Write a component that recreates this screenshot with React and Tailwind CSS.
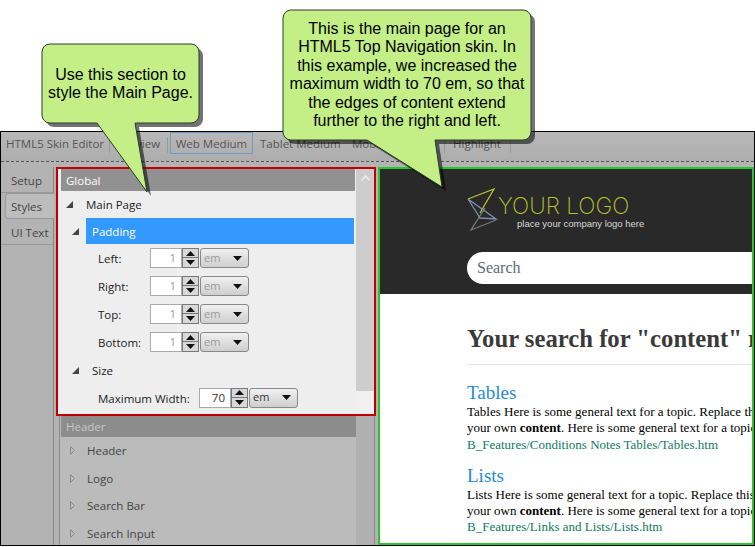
import React from 'react';

const uiFont = "font-['Open_Sans',sans-serif]";

function Expanded() {
  return (
    <svg width="7" height="7" viewBox="0 0 7 7" className="shrink-0">
      <path d="M7 0V7H0Z" fill="#444" />
    </svg>
  );
}

function Collapsed() {
  return (
    <svg width="5" height="9" viewBox="0 0 5 9" className="shrink-0">
      <path d="M0.5 0.5L4.5 4.5L0.5 8.5Z" fill="none" stroke="#8a8a8a" />
    </svg>
  );
}

function Stepper({ value, active }) {
  return (
    <div className="flex items-center h-[20px]">
      <div className={`w-[32px] h-[20px] bg-white border border-[#aaa] flex items-center justify-end pr-[5px] text-[11.5px] ${active ? 'text-[#333]' : 'text-[#999]'}`}>
        {value}
      </div>
      <div className="w-[17px] h-[20px] bg-[#d8d8d8] border border-[#777] flex flex-col items-center justify-around py-[1px]">
        <svg width="9" height="5" viewBox="0 0 9 5"><path d="M4.5 0L9 5H0Z" fill="#111" /></svg>
        <div className="w-full h-px bg-[#777]" />
        <svg width="9" height="5" viewBox="0 0 9 5"><path d="M0 0H9L4.5 5Z" fill="#111" /></svg>
      </div>
      <div className={`w-[49px] h-[20px] ml-[1px] rounded-[3px] border border-[#888] bg-gradient-to-b from-[#f0f0f0] to-[#cfcfcf] flex items-center justify-between pl-[3px] pr-[6px] text-[11px] ${active ? 'text-[#333]' : 'text-[#999]'}`}>
        em
        <svg width="9" height="5" viewBox="0 0 9 5"><path d="M0 0H9L4.5 5Z" fill="#111" /></svg>
      </div>
    </div>
  );
}

function FieldRow({ label }) {
  return (
    <div className="h-[28px] flex items-center pl-[37px]">
      <span className="w-[52px] pt-[2px] text-[11.5px] text-[#222]">{label}</span>
      <Stepper value="1" />
    </div>
  );
}

function DimRow({ label }) {
  return (
    <div className="h-[27.6px] flex items-center pl-[9px] shrink-0">
      <Collapsed />
      <span className="ml-[12px] text-[11.5px] text-[#444]">{label}</span>
    </div>
  );
}

function ToolItem({ children, className = '' }) {
  return <div className={`text-[11.5px] text-[#555] whitespace-nowrap mb-[5px] ${className}`}>{children}</div>;
}

function Sep() {
  return <div className="w-px h-[16px] mb-[4px] bg-[#999]" />;
}

function GlobalPanel() {
  return (
    <div className="border-2 border-[#c00000] h-[249px] flex bg-[#eeeeee] overflow-hidden">
      <div className="flex-1 pl-[3px] min-w-0">
        <div className="h-[22px] pt-[2px] mr-[1px] bg-[#919191] text-white text-[11.5px] flex items-center pl-[5px]">Global</div>
        <div className="h-[27px] flex items-center pl-[5px] text-[11.5px] text-[#222]">
          <Expanded />
          <span className="ml-[13px]">Main Page</span>
        </div>
        <div className="flex h-[26px] items-center pl-[11px]">
          <Expanded />
          <div className="ml-[7px] flex-1 h-[26px] pt-[2px] bg-[#3399ff] text-white text-[11.5px] flex items-center pl-[6px] mr-[2px]">Padding</div>
        </div>
        <FieldRow label="Left:" />
        <FieldRow label="Right:" />
        <FieldRow label="Top:" />
        <FieldRow label="Bottom:" />
        <div className="h-[28px] flex items-center pl-[11px] text-[11.5px] text-[#222]">
          <Expanded />
          <span className="ml-[13px] pt-[2px]">Size</span>
        </div>
        <div className="h-[27px] flex items-center pl-[37px]">
          <span className="w-[101px] pt-[2px] text-[11.5px] text-[#222]">Maximum Width:</span>
          <Stepper value="70" active />
        </div>
      </div>
      <div className="w-[18px] shrink-0 flex flex-col">
        <div className="h-[222px] bg-[#cdcdcd] flex justify-center pt-[6px]">
          <svg width="9" height="6" viewBox="0 0 9 6"><path d="M0.5 5.5L4.5 1L8.5 5.5" fill="none" stroke="#eee" strokeWidth="1.5" /></svg>
        </div>
        <div className="flex-1 bg-[#f0f0f0]" />
      </div>
    </div>
  );
}

function LogoMark() {
  return (
    <svg width="32" height="44" viewBox="0 0 32 44" className="shrink-0" fill="none" strokeWidth="1.3">
      <path d="M1 11L27 1L13 25" stroke="#b3c62b" />
      <path d="M29 32L4 42L18 20" stroke="#6e7d72" />
      <path d="M13 30L1 11L29 31Z" stroke="#7d93b3" />
    </svg>
  );
}

function Result({ title, first, path, second }) {
  return (
    <div className="mt-[12px] first:mt-0">
      <div className="text-[19px] leading-[22px] text-[#1f8bd6]">{title}</div>
      <div className="text-[13px] leading-[16.3px] text-black whitespace-nowrap">{first}</div>
      <div className="text-[13px] leading-[16.3px] text-black whitespace-nowrap">
        your own <b>content</b>. {second}
      </div>
      <div className="text-[13px] leading-[16.3px] text-[#0f7a63] whitespace-nowrap">{path}</div>
    </div>
  );
}

function Preview() {
  return (
    <div className="w-[376px] shrink-0 ml-[2px] h-[378px] border-2 border-[#2dc52d] bg-white overflow-hidden font-['Liberation_Serif',serif]">
      <div className="h-[125px] bg-[#292929] pl-[87px] overflow-hidden">
        <div className="flex items-start pt-[19px] h-[83px]">
          <LogoMark />
          <div className="ml-[-1px] mt-[5px]">
            <div className="font-['Inter',sans-serif] font-extralight text-[22.7px] leading-[26px] text-[#b4c32a] whitespace-nowrap">YOUR LOGO</div>
            <div className="font-['Liberation_Sans',sans-serif] text-[9.5px] leading-[10px] text-[#d8d8d8] pl-[19px] whitespace-nowrap">place your company logo here</div>
          </div>
        </div>
        <div className="h-[32px] bg-white rounded-l-[16px] flex items-center pl-[10px] text-[16px] text-[#5f6b78]">Search</div>
      </div>
      <div className="pl-[87px]">
        <h1 className="mt-[29px] text-[24.7px] leading-[32px] font-bold text-[#3a3a3a] whitespace-nowrap">Your search for "content" returned</h1>
        <div className="mt-[9px] mb-[17px] h-px bg-[#e6e6e6]" />
        <Result
          title="Tables"
          first="Tables Here is some general text for a topic. Replace this text with"
          second="Here is some general text for a topic. Replace"
          path="B_Features/Conditions Notes Tables/Tables.htm"
        />
        <Result
          title="Lists"
          first="Lists Here is some general text for a topic. Replace this text with"
          second="Here is some general text for a topic. Replace"
          path="B_Features/Links and Lists/Lists.htm"
        />
      </div>
    </div>
  );
}

function Callouts() {
  const first = 'M50 44H191A8 8 0 0 1 199 52V115A8 8 0 0 1 191 123H135L147 192L97 123H50A8 8 0 0 1 42 115V52A8 8 0 0 1 50 44Z';
  const second = 'M291 10H523A8 8 0 0 1 531 18V132A8 8 0 0 1 523 140H435L442 187L367 140H291A8 8 0 0 1 283 132V18A8 8 0 0 1 291 10Z';
  return (
    <>
      <svg width="755" height="547" viewBox="0 0 755 547" className="absolute inset-0">
        <path d={first} fill="#000" fillOpacity="0.55" transform="translate(4 4)" />
        <path d={second} fill="#000" fillOpacity="0.55" transform="translate(4 4)" />
        <path d={first} fill="#c3ef86" stroke="#2b3d2b" />
        <path d={second} fill="#c3ef86" stroke="#2b3d2b" />
      </svg>
      <div className="absolute left-[42px] top-[66px] w-[157px] text-center font-['Liberation_Sans',sans-serif] text-[16px] leading-[18px] text-black">
        Use this section to<br />style the Main Page.
      </div>
      <div className="absolute left-[283px] top-[20px] w-[248px] text-center font-['Liberation_Sans',sans-serif] text-[16px] leading-[18.4px] text-black">
        This is the main page for an<br />HTML5 Top Navigation skin. In<br />this example, we increased the<br />maximum width to 70 em, so that<br />the edges of content extend<br />further to the right and left.
      </div>
    </>
  );
}

export default function App() {
  return (
    <div className={`relative w-[755px] h-[547px] bg-white overflow-hidden ${uiFont}`}>
      <div className="pt-[131px]">
        <div className="h-[415px] border border-black bg-[#b3b3b3] flex flex-col overflow-hidden">
          <div className="h-[30px] shrink-0 flex items-center pl-[5px] bg-gradient-to-b from-[#b8b8b8] to-[#adadad] border-b border-dashed border-[#555]">
            <ToolItem className="w-[103px]">HTML5 Skin Editor</ToolItem>
            <Sep />
            <ToolItem className="w-[57px] pl-[8px]">Preview</ToolItem>
            <Sep />
            <div className="ml-[2px] w-[83px] h-[22px] pt-[2px] border border-[#6d9bc8] flex items-center justify-center text-[11.5px] text-[#555] self-start">Web Medium</div>
            <ToolItem className="ml-[7px] w-[92px]">Tablet Medium</ToolItem>
            <ToolItem className="w-[92px]">Mobile</ToolItem>
            <Sep />
            <ToolItem className="pl-[8px] w-[65px]">Highlight</ToolItem>
            <Sep />
          </div>
          <div className="flex flex-1 min-h-0 pt-[5px]">
            <div className="w-[53px] shrink-0 border-r border-[#888] text-[11.5px] text-[#444] flex flex-col">
              <div className="h-[26px] pl-[10px] pt-[2px] flex items-center border-b border-[#999]">Setup</div>
              <div className="h-[26px] ml-[4px] mr-[-1px] pl-[5px] pt-[2px] flex items-center border border-[#999] border-r-0 rounded-l-[4px] bg-[#bdbdbd]">Styles</div>
              <div className="h-[26px] pl-[10px] pt-[2px] flex items-center border-b border-[#999]">UI Text</div>
            </div>
            <div className="w-[320px] shrink-0 ml-[2px] flex flex-col">
              <GlobalPanel />
              <div className="flex-1 min-h-0 flex border-l border-r border-[#888] ml-[3px] mr-[1px] overflow-hidden bg-[#bbbbbb]">
                <div className="flex-1 pl-[1px]">
                  <div className="h-[21px] bg-[#8c8c8c] text-[11.5px] text-[#c8c8c8] flex items-center pl-[5px]">Header</div>
                  <DimRow label="Header" />
                  <DimRow label="Logo" />
                  <DimRow label="Search Bar" />
                  <DimRow label="Search Input" />
                </div>
                <div className="w-[18px] shrink-0 bg-[#b0b0b0]" />
              </div>
            </div>
            <Preview />
          </div>
        </div>
      </div>
      <Callouts />
    </div>
  );
}
